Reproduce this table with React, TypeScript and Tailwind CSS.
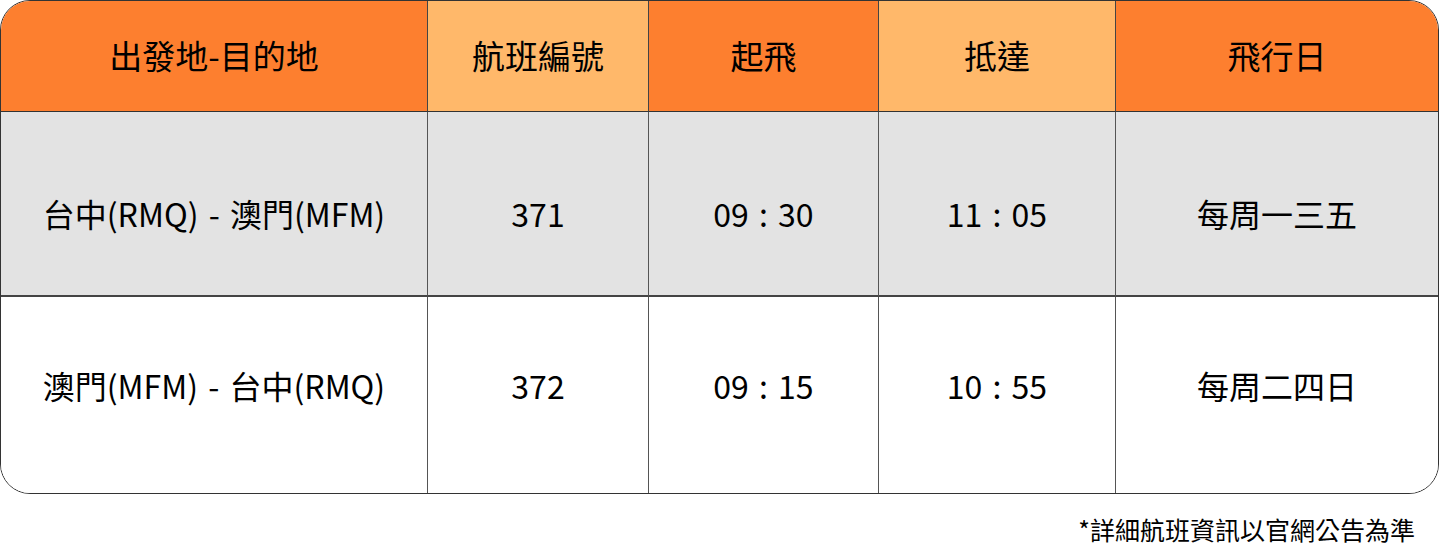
import React from 'react';

const headers = [
  { label: '出發地-目的地', bg: 'bg-[#fd7f2f]' },
  { label: '航班編號', bg: 'bg-[#ffb86a]' },
  { label: '起飛', bg: 'bg-[#fd7f2f]' },
  { label: '抵達', bg: 'bg-[#ffb86a]' },
  { label: '飛行日', bg: 'bg-[#fd7f2f]' },
];

const rows = [
  {
    cells: ['台中(RMQ) - 澳門(MFM)', '371', '09 : 30', '11 : 05', '每周一三五'],
    className: 'bg-[#e3e3e3] h-[185px] pt-[18px]',
  },
  {
    cells: ['澳門(MFM) - 台中(RMQ)', '372', '09 : 15', '10 : 55', '每周二四日'],
    className: 'bg-white h-[196px] pb-[20px]',
  },
];

export default function App() {
  return (
    <div
      className="w-[1439px] h-[547px] bg-white text-black"
      style={{ fontFamily: '"Noto Sans CJK TC", "Noto Sans", sans-serif' }}
    >
      <div className="border border-[#333] rounded-[30px] overflow-hidden">
        <div className="grid grid-cols-[427px_221px_230px_237px_1fr]">
          {headers.map((h, i) => (
            <div
              key={h.label}
              className={`${h.bg} h-[111px] flex items-center justify-center text-[33px] font-normal border-b border-[#333] ${i < 4 ? 'border-r border-r-[#444]' : ''}`}
            >
              {h.label}
            </div>
          ))}
          {rows.map((row, r) =>
            row.cells.map((c, i) => (
              <div
                key={`${r}-${i}`}
                className={`${row.className} flex items-center justify-center text-[32px] [word-spacing:3px] ${i < 4 ? 'border-r border-r-[#555]' : ''} ${r === 0 ? 'border-b-2 border-b-[#444]' : ''}`}
              >
                {c}
              </div>
            ))
          )}
        </div>
      </div>
      <div className="flex justify-end pr-[24px] pt-[23px] text-[25px] leading-none">
        *詳細航班資訊以官網公告為準
      </div>
    </div>
  );
}
